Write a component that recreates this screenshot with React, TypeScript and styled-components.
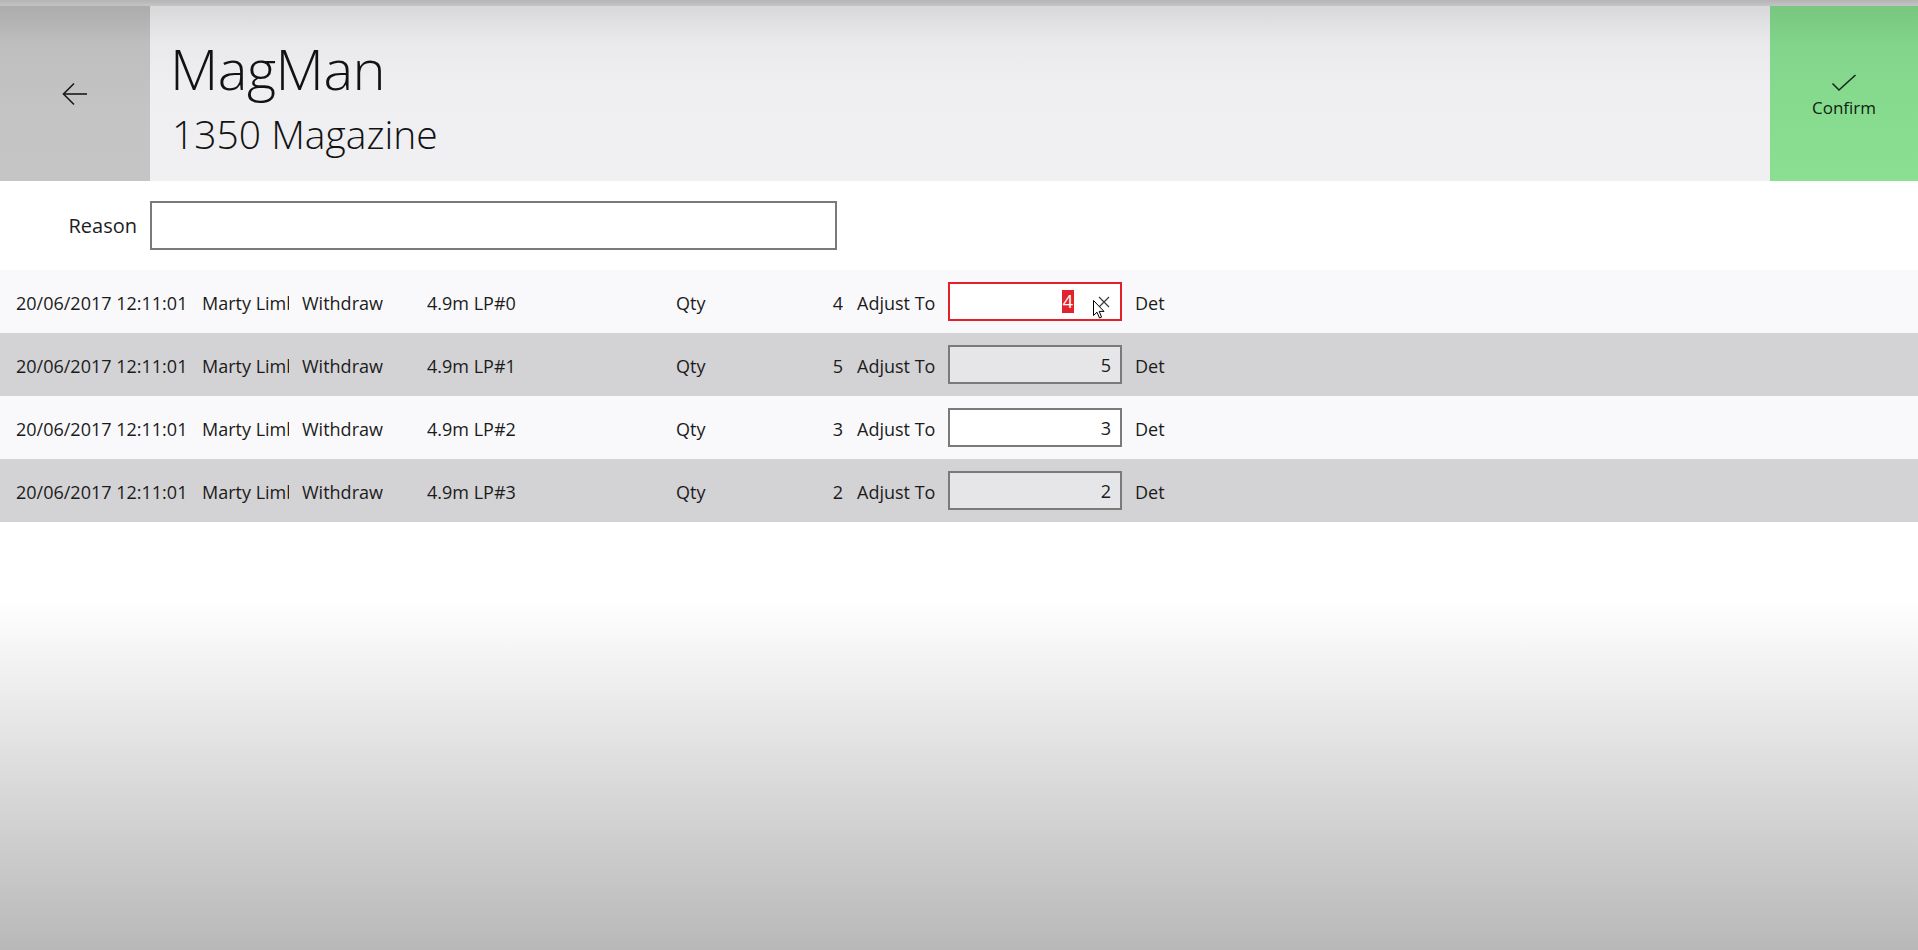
import React from 'react';
import styled, { createGlobalStyle } from 'styled-components';

const GlobalStyle = createGlobalStyle`
  html, body { margin: 0; padding: 0; background: #ffffff; }
  body { font-family: "Open Sans", "Noto Sans", sans-serif; color: #1b1b1b; }
  * { box-sizing: border-box; }
`;

const Page = styled.div`
  display: flex;
  flex-direction: column;
  min-height: 100vh;
  width: 100%;
`;

const TopStrip = styled.div`
  height: 6px;
  background: linear-gradient(to bottom, #b4b4b4, #c4c4c4);
`;

const Header = styled.header`
  display: flex;
  height: 175px;
`;

const BackButton = styled.div`
  width: 150px;
  display: flex;
  align-items: center;
  justify-content: center;
  background: linear-gradient(to bottom, #acacac 0%, #bebebe 22%, #c4c4c4 60%, #c5c5c5 100%);
`;

const TitleBlock = styled.div`
  flex: 1;
  display: flex;
  flex-direction: column;
  padding-left: 20px;
  padding-top: 29px;
  background: linear-gradient(to bottom, #d8d8da 0%, #e9e8eb 20%, #efeef1 45%, #f0eff2 100%);
`;

const Title = styled.div`
  font-weight: 300;
  font-size: 56px;
  line-height: 66px;
  color: #121212;
  letter-spacing: -0.5px;
`;

const Subtitle = styled.div`
  font-weight: 300;
  font-size: 39px;
  line-height: 54px;
  margin-top: 6px;
  color: #121212;
  margin-left: 2px;
`;

const ConfirmButton = styled.div`
  width: 148px;
  display: flex;
  flex-direction: column;
  align-items: center;
  justify-content: center;
  padding-top: 6px;
  gap: 4px;
  background: linear-gradient(to bottom, #78c680 0%, #82d48a 22%, #86da8e 50%, #8adf92 100%);
  color: #0e1f10;
  font-size: 17px;
`;

const ReasonRow = styled.div`
  display: flex;
  align-items: center;
  height: 89px;
  background: #ffffff;
`;

const ReasonLabel = styled.div`
  width: 150px;
  padding-right: 13px;
  text-align: right;
  font-size: 20px;
  color: #1e1e1e;
`;

const ReasonInput = styled.div`
  width: 687px;
  height: 49px;
  border: 2px solid #7a7a7a;
  background: #ffffff;
`;

const Row = styled.div<{ $alt: boolean }>`
  display: grid;
  grid-template-columns: 186px 100px 125px 249px 100px 67px 105px 174px auto;
  align-items: center;
  height: 63px;
  padding-left: 16px;
  padding-top: 2px;
  font-size: 18px;
  color: #1b1b1b;
  background: ${(p) => (p.$alt ? '#d3d2d5' : '#f9f9fb')};
`;

const Cell = styled.div`
  white-space: nowrap;
  overflow: hidden;
`;

const NameCell = styled(Cell)`
  width: 87px;
`;

const NumCell = styled(Cell)`
  text-align: right;
`;

const AdjustLabel = styled(Cell)`
  padding-left: 14px;
`;

const DetCell = styled(Cell)`
  padding-left: 13px;
`;

const QtyBox = styled.div<{ $focused: boolean; $alt: boolean }>`
  position: relative;
  height: 39px;
  margin-top: -2px;
  display: flex;
  align-items: center;
  justify-content: flex-end;
  padding-right: ${(p) => (p.$focused ? '46px' : '9px')};
  border: 2px solid ${(p) => (p.$focused ? '#e41f28' : '#7a7a7a')};
  background: ${(p) => (p.$focused ? '#ffffff' : p.$alt ? '#e6e5e8' : '#ffffff')};
`;

const Selected = styled.span`
  background: #e3232b;
  color: #ffffff;
  padding: 0 1px;
  line-height: 23px;
`;

const ClearButton = styled.span`
  position: absolute;
  right: 4px;
  top: 50%;
  transform: translateY(-50%);
  width: 24px;
  height: 24px;
  display: flex;
  align-items: center;
  justify-content: center;
`;

const Cursor = styled.svg`
  position: absolute;
  left: 143px;
  top: 16px;
`;

const Filler = styled.div`
  flex: 1;
  background: linear-gradient(to bottom, #ffffff 0px, #ffffff 78px, #b8b8b8 100%);
`;

const rows = [
  { lp: '4.9m LP#0', qty: 4 },
  { lp: '4.9m LP#1', qty: 5 },
  { lp: '4.9m LP#2', qty: 3 },
  { lp: '4.9m LP#3', qty: 2 },
];

export default function App() {
  return (
    <>
      <GlobalStyle />
      <Page>
        <TopStrip />
        <Header>
          <BackButton>
            <svg width="26" height="24" viewBox="0 0 26 24" fill="none" stroke="#1a1a1a" strokeWidth="1.6">
              <path d="M1.5 12 H25" />
              <path d="M12 1.5 L1.5 12 L12 22.5" />
            </svg>
          </BackButton>
          <TitleBlock>
            <Title>MagMan</Title>
            <Subtitle>1350 Magazine</Subtitle>
          </TitleBlock>
          <ConfirmButton>
            <svg width="26" height="18" viewBox="0 0 26 18" fill="none" stroke="#15261a" strokeWidth="1.6">
              <path d="M1.5 9.5 L8 16 L24.5 1" />
            </svg>
            <span>Confirm</span>
          </ConfirmButton>
        </Header>
        <ReasonRow>
          <ReasonLabel>Reason</ReasonLabel>
          <ReasonInput />
        </ReasonRow>
        {rows.map((r, i) => {
          const alt = i % 2 === 1;
          const focused = i === 0;
          return (
            <Row key={r.lp} $alt={alt}>
              <Cell>20/06/2017 12:11:01</Cell>
              <NameCell>Marty Limbrick</NameCell>
              <Cell>Withdraw</Cell>
              <Cell>{r.lp}</Cell>
              <Cell>Qty</Cell>
              <NumCell>{r.qty}</NumCell>
              <AdjustLabel>Adjust To</AdjustLabel>
              <QtyBox $focused={focused} $alt={alt}>
                {focused ? <Selected>{r.qty}</Selected> : <span>{r.qty}</span>}
                {focused && (
                  <>
                    <ClearButton>
                      <svg width="12" height="12" viewBox="0 0 12 12" stroke="#3a3a3a" strokeWidth="1.2">
                        <path d="M1 1 L11 11 M11 1 L1 11" />
                      </svg>
                    </ClearButton>
                    <Cursor width="12" height="19" viewBox="0 0 12 19">
                      <path d="M0.5 0.5 L0.5 15.5 L4 12.2 L6.5 18 L8.6 17.1 L6.2 11.4 L11 11.4 Z" fill="#ffffff" stroke="#000000" strokeWidth="1" />
                    </Cursor>
                  </>
                )}
              </QtyBox>
              <DetCell>Det</DetCell>
            </Row>
          );
        })}
        <Filler />
      </Page>
    </>
  );
}
